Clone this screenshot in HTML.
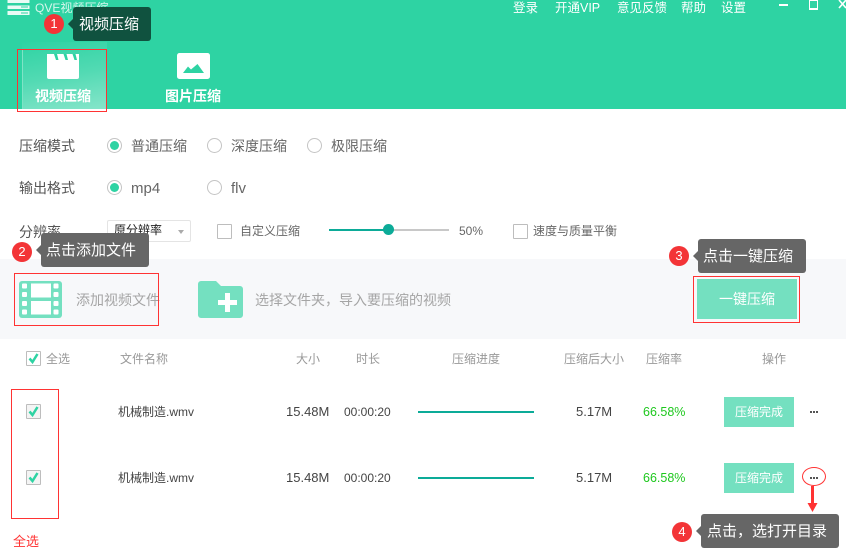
<!DOCTYPE html>
<html lang="zh"><head><meta charset="utf-8"><title>QVE视频压缩</title>
<style>
*{box-sizing:border-box}
html,body{margin:0;padding:0}
body{width:846px;height:555px;overflow:hidden;background:#fff;position:relative;font-family:"Liberation Sans","Noto Sans CJK SC",sans-serif;font-size:14px;color:#666}
.a{position:absolute;white-space:nowrap}
.t{position:absolute;white-space:nowrap;line-height:18px;height:18px}
.w{color:#fff}
.r{position:absolute;width:15px;height:15px;border:1px solid #c4c4c4;border-radius:50%;background:#fff}
.r.on::after{content:"";position:absolute;left:2px;top:2px;width:9px;height:9px;border-radius:50%;background:#2ed3a3}
.c{position:absolute;width:15px;height:15px;border:1px solid #bdbdbd;border-radius:1px;background:#fff}
.c svg{position:absolute;left:0;top:0}
.red{position:absolute;border:1px solid #f33;}
.tip{position:absolute;height:34px;background:#666;border-radius:3px;color:#fff;font-size:15px;line-height:35px;padding-left:5px;white-space:nowrap}
.tip::before{content:"";position:absolute;left:-5px;top:12px;border:5px solid transparent;border-left:0;border-right:5px solid #666}
.n{position:absolute;width:20px;height:20px;border-radius:50%;background:#f33437;color:#fff;font-size:13px;line-height:20px;text-align:center}
.btn{position:absolute;background:#74e0c0;color:#fff;text-align:center}
.h{color:#999;font-size:12px}
.d{color:#444;font-size:12px}
.n13{color:#444;font-size:13px}
.dot{position:absolute;width:2px;height:2px;background:#555}
.m{font-size:12.500px;top:-1px}
</style></head><body>

<div class="a" style="left:0;top:0;width:846px;height:109px;background:#2ed3a3"></div>
<div class="a" style="left:22px;top:42px;width:85px;height:67px;background:linear-gradient(170deg,#2ed3a3 0%,#52dab3 50%,#86e5ca 100%)"></div>
<div class="a" style="left:22px;top:49px;width:1px;height:60px;background:#7fe3c6"></div>

<!-- app logo -->
<svg class="a" style="left:7px;top:0" width="23" height="16" viewBox="0 0 23 16"><path d="M0.500 0H22.500V3H0.500ZM0.500 5.500H22.500V9H0.500ZM0.500 11H22.500V15H0.500Z" fill="#e9fbf5"/><path d="M14 6.500H21V7.500H14ZM14 12.500H21V13.500H14Z" fill="#2ed3a3"/></svg>
<div class="t" style="left:35px;top:-1px;color:#d6f6ec;font-size:12px">QVE视频压缩</div>

<!-- top menu -->
<div class="t w m" style="left:513px">登录</div>
<div class="t w m" style="left:555px">开通VIP</div>
<div class="t w m" style="left:617px">意见反馈</div>
<div class="t w m" style="left:681px">帮助</div>
<div class="t w m" style="left:721px">设置</div>
<div class="a" style="left:779px;top:4px;width:9px;height:2px;background:#fff"></div>
<div class="a" style="left:809px;top:0;width:9px;height:10px;border:1px solid #fff;border-width:1px 1px 2px"></div>
<svg class="a" style="left:838px;top:0" width="8" height="10" viewBox="0 0 8 10"><path d="M1 0L8 8M1 8L8 0" stroke="#fff" stroke-width="1.600" fill="none"/></svg>

<!-- tabs -->
<svg class="a" style="left:47px;top:53px" width="33" height="27" viewBox="0 0 33 27"><path d="M0 1H32V24a2 2 0 0 1-2 2H2a2 2 0 0 1-2-2Z" fill="#fff"/><path d="M7 1H10L11.500 7H9ZM16.500 1H19.500L21 7H18.500ZM25.500 1H28.500L30 7H27.500Z" fill="#2ed3a3"/></svg>
<div class="t w" style="left:35px;top:87px;font-size:14px;font-weight:bold">视频压缩</div>
<svg class="a" style="left:177px;top:53px" width="33" height="27" viewBox="0 0 33 27"><rect width="33" height="26" rx="2.500" fill="#fff"/><path d="M6 20L11 13.500L14 16.500L20.500 11L27 20Z" fill="#2ed3a3"/></svg>
<div class="t w" style="left:165px;top:87px;font-size:14px;font-weight:bold">图片压缩</div>
<div class="red" style="left:17px;top:49px;width:90px;height:63px"></div>

<!-- options -->
<div class="t" style="left:19px;top:137px;color:#555">压缩模式</div>
<div class="r on" style="left:107px;top:138px"></div>
<div class="t" style="left:131px;top:137px">普通压缩</div>
<div class="r" style="left:207px;top:138px"></div>
<div class="t" style="left:231px;top:137px">深度压缩</div>
<div class="r" style="left:307px;top:138px"></div>
<div class="t" style="left:331px;top:137px">极限压缩</div>

<div class="t" style="left:19px;top:179px;color:#555">输出格式</div>
<div class="r on" style="left:107px;top:180px"></div>
<div class="t" style="left:131px;top:180px;font-size:15px">mp4</div>
<div class="r" style="left:207px;top:180px"></div>
<div class="t" style="left:231px;top:180px;font-size:15px">flv</div>

<div class="t" style="left:19px;top:223px;color:#555">分辨率</div>
<div class="a" style="left:107px;top:220px;width:84px;height:22px;border:1px solid #e4e4e4;border-radius:2px"></div>
<div class="t" style="left:114px;top:221px;font-size:12px;color:#222">原分辨率</div>
<div class="a" style="left:178px;top:230px;border:3px solid transparent;border-top:4px solid #aaa;border-bottom:0"></div>
<div class="c" style="left:217px;top:224px"></div>
<div class="t" style="left:240px;top:222px;font-size:12px">自定义压缩</div>
<div class="a" style="left:329px;top:229px;width:60px;height:2px;background:#0cab98"></div>
<div class="a" style="left:389px;top:229px;width:60px;height:2px;background:#c8c8c8"></div>
<div class="a" style="left:383px;top:224px;width:11px;height:11px;border-radius:50%;background:#0cab98"></div>
<div class="t" style="left:459px;top:222px;font-size:12px">50%</div>
<div class="c" style="left:513px;top:224px"></div>
<div class="t" style="left:533px;top:222px;font-size:12px">速度与质量平衡</div>

<!-- toolbar -->
<div class="a" style="left:0;top:259px;width:846px;height:80px;background:#f7f8fa"></div>
<svg class="a" style="left:19px;top:281px" width="43" height="37" viewBox="0 0 43 37"><rect width="43" height="37" rx="3" fill="#74e0c0"/><g fill="#fff"><rect x="12" y="2.500" width="20" height="14"/><rect x="12" y="20" width="20" height="13.500"/><rect x="3" y="2.500" width="5" height="5" rx="1"/><rect x="3" y="11" width="5" height="5" rx="1"/><rect x="3" y="20" width="5" height="5" rx="1"/><rect x="3" y="28.500" width="5" height="5" rx="1"/><rect x="34.500" y="2.500" width="5" height="5" rx="1"/><rect x="34.500" y="11" width="5" height="5" rx="1"/><rect x="34.500" y="20" width="5" height="5" rx="1"/><rect x="34.500" y="28.500" width="5" height="5" rx="1"/></g></svg>
<div class="t" style="left:76px;top:291px;color:#a5a5a5">添加视频文件</div>
<div class="red" style="left:14px;top:273px;width:145px;height:53px"></div>
<svg class="a" style="left:198px;top:281px" width="45" height="37" viewBox="0 0 45 37"><path d="M3 0H18L23 5H42a3 3 0 0 1 3 3V34a3 3 0 0 1-3 3H3a3 3 0 0 1-3-3V3a3 3 0 0 1 3-3Z" fill="#74e0c0"/><path d="M27 12H32V19H39V24H32V31H27V24H20V19H27Z" fill="#fff"/></svg>
<div class="t" style="left:255px;top:291px;color:#a5a5a5">选择文件夹，导入要压缩的视频</div>
<div class="btn" style="left:697px;top:279px;width:100px;height:40px;line-height:41px;font-size:14px">一键压缩</div>
<div class="red" style="left:693px;top:276px;width:107px;height:47px"></div>

<!-- table head -->
<div class="c" style="left:26px;top:351px"><svg width="13" height="13" viewBox="0 0 13 13"><path d="M2.500 6.500L5.500 10L10.500 2" fill="none" stroke="#2ed3a3" stroke-width="2.500"/></svg></div>
<div class="t h" style="left:46px;top:350px">全选</div>
<div class="t h" style="left:120px;top:350px">文件名称</div>
<div class="t h" style="left:296px;top:350px">大小</div>
<div class="t h" style="left:356px;top:350px">时长</div>
<div class="t h" style="left:452px;top:350px">压缩进度</div>
<div class="t h" style="left:564px;top:350px">压缩后大小</div>
<div class="t h" style="left:646px;top:350px">压缩率</div>
<div class="t h" style="left:762px;top:350px">操作</div>

<!-- row 1 -->
<div class="c" style="left:26px;top:404px;background:#f4f4f4"><svg width="13" height="13" viewBox="0 0 13 13"><path d="M2.500 6.500L5.500 10L10.500 2" fill="none" stroke="#2ed3a3" stroke-width="2.500"/></svg></div>
<div class="t d" style="left:118px;top:403px">机械制造.wmv</div>
<div class="t n13" style="left:286px;top:403px">15.48M</div>
<div class="t d" style="left:344px;top:403px">00:00:20</div>
<div class="a" style="left:418px;top:411px;width:116px;height:2px;background:#0cab98"></div>
<div class="t n13" style="left:576px;top:403px">5.17M</div>
<div class="t" style="left:643px;top:403px;font-size:12.500px;color:#1ec81e">66.58%</div>
<div class="btn" style="left:724px;top:397px;width:70px;height:30px;line-height:30px;font-size:12px">压缩完成</div>
<div class="dot" style="left:810px;top:411px"></div><div class="dot" style="left:813px;top:411px"></div><div class="dot" style="left:816px;top:411px"></div>

<!-- row 2 -->
<div class="c" style="left:26px;top:470px;background:#f4f4f4"><svg width="13" height="13" viewBox="0 0 13 13"><path d="M2.500 6.500L5.500 10L10.500 2" fill="none" stroke="#2ed3a3" stroke-width="2.500"/></svg></div>
<div class="t d" style="left:118px;top:469px">机械制造.wmv</div>
<div class="t n13" style="left:286px;top:469px">15.48M</div>
<div class="t d" style="left:344px;top:469px">00:00:20</div>
<div class="a" style="left:418px;top:477px;width:116px;height:2px;background:#0cab98"></div>
<div class="t n13" style="left:576px;top:469px">5.17M</div>
<div class="t" style="left:643px;top:469px;font-size:12.500px;color:#1ec81e">66.58%</div>
<div class="btn" style="left:724px;top:463px;width:70px;height:30px;line-height:30px;font-size:12px">压缩完成</div>
<div class="dot" style="left:810px;top:477px"></div><div class="dot" style="left:813px;top:477px"></div><div class="dot" style="left:816px;top:477px"></div>

<!-- annotations -->
<div class="red" style="left:11px;top:389px;width:48px;height:130px"></div>
<div class="t" style="left:13px;top:533px;color:#f33;font-size:13px">全选</div>
<div class="a" style="left:802px;top:467px;width:24px;height:19px;border:1px solid #f33;border-radius:50%"></div>
<svg class="a" style="left:807px;top:486px" width="11" height="27" viewBox="0 0 11 27"><path d="M4 0H7V17H10.500L5.500 26L0.500 17H4Z" fill="#f33"/></svg>

<div class="tip" style="left:73px;top:7px;width:78px;background:#10523f;padding-left:6px">视频压缩</div>
<div class="a" style="left:68px;top:19px;border:5px solid transparent;border-left:0;border-right:5px solid #10523f"></div>
<div class="n" style="left:44px;top:14px">1</div>

<div class="tip" style="left:41px;top:233px;width:108px">点击添加文件</div>
<div class="n" style="left:12px;top:242px">2</div>

<div class="tip" style="left:698px;top:239px;width:108px">点击一键压缩</div>
<div class="n" style="left:669px;top:246px">3</div>

<div class="tip" style="left:701px;top:514px;width:138px;padding-left:6px">点击，选打开目录</div>
<div class="n" style="left:672px;top:522px">4</div>

</body></html>
